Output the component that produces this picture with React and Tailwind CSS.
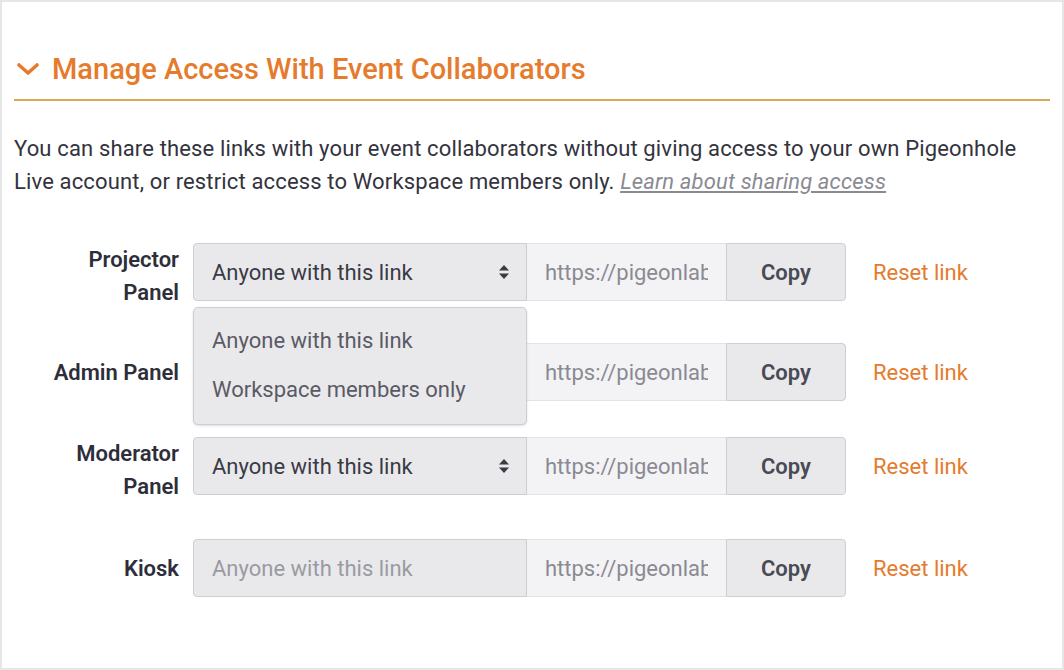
import { useState } from 'react';

const rows = [
  { id: 'projector', label: ['Projector', 'Panel'], mt: 'mt-[41px]' },
  { id: 'admin', label: ['Admin Panel'], mt: 'mt-[34px]' },
  { id: 'moderator', label: ['Moderator', 'Panel'], mt: 'mt-[28px]' },
  { id: 'kiosk', label: ['Kiosk'], mt: 'mt-[36px]', disabled: true },
];

function SortArrows() {
  return (
    <svg width="12" height="16" viewBox="0 0 12 16" className="text-[#3a3a45]">
      <path d="M6 1 L11 6.5 H1 Z" fill="currentColor" />
      <path d="M6 15 L11 9.5 H1 Z" fill="currentColor" />
    </svg>
  );
}

function AccessRow({ row, open }) {
  return (
    <div className={`${row.mt} flex h-[66px] items-center`}>
      <div
        className={`w-[165px] text-right text-[22px] font-semibold leading-[33px] text-[#2e2e3a] ${
          row.label.length > 1 ? 'pt-[8px]' : ''
        }`}
      >
        {row.label.map((l) => (
          <div key={l}>{l}</div>
        ))}
      </div>
      <div className="relative ml-[14px] flex h-[58px]">
        <div
          className={`flex w-[334px] items-center justify-between rounded-l-[4px] border border-[#cdcdd2] bg-[#e9e9ec] pl-[18px] pr-[16px] text-[22px] ${
            row.disabled ? 'text-[#9a9aa2]' : 'text-[#3a3a45]'
          }`}
        >
          <span>Anyone with this link</span>
          {!row.disabled && <SortArrows />}
        </div>
        <input
          readOnly
          value="https://pigeonlab.io/collab"
          className="w-[199px] border-y border-[#e3e3e7] bg-[#f3f3f5] px-[18px] text-[22px] text-[#8a8a92] outline-none"
        />
        <button className="w-[120px] rounded-r-[4px] border border-[#cdcdd2] bg-[#e9e9ec] text-[22px] font-semibold text-[#4a4a55]">
          Copy
        </button>
        {open && (
          <div className="absolute left-0 top-[64px] z-10 h-[118px] w-[334px] rounded-[5px] border border-[#cdcdd2] bg-[#e9e9ec] pl-[18px] pt-[8px] text-[22px] text-[#5a5a64] shadow-sm">
            <div className="leading-[49px]">Anyone with this link</div>
            <div className="leading-[49px]">Workspace members only</div>
          </div>
        )}
      </div>
      <a className="ml-[27px] cursor-pointer text-[22px] text-[#e57b2c]">Reset link</a>
    </div>
  );
}

export default function App() {
  const [open] = useState('projector');

  return (
    <div className="min-h-screen border-2 border-[#e6e6e6] bg-white px-[12px] font-['Roboto','Liberation_Sans',sans-serif]">
      <div className="flex items-center border-b-2 border-[#dba75c] pb-[12px] pt-[49px]">
        <svg width="24" height="14" viewBox="0 0 24 14" className="ml-[2px] text-[#e57b2c]">
          <polyline points="3,3 12,11 21,3" fill="none" stroke="currentColor" strokeWidth="3.6" strokeLinecap="round" strokeLinejoin="round" />
        </svg>
        <h2 className="ml-[12px] text-[29px] font-medium leading-[36px] text-[#e57b2c]">
          Manage Access With Event Collaborators
        </h2>
      </div>

      <p className="mt-[31px] pr-[24px] text-[22px] leading-[33px] tracking-[0.15px] text-[#33333d]">
        You can share these links with your event collaborators without giving access to your own Pigeonhole Live account, or restrict access to Workspace members only.{' '}
        <a className="cursor-pointer italic text-[#8a8a92] underline">Learn about sharing access</a>
      </p>

      {rows.map((row) => (
        <AccessRow key={row.id} row={row} open={open === row.id} />
      ))}
    </div>
  );
}
